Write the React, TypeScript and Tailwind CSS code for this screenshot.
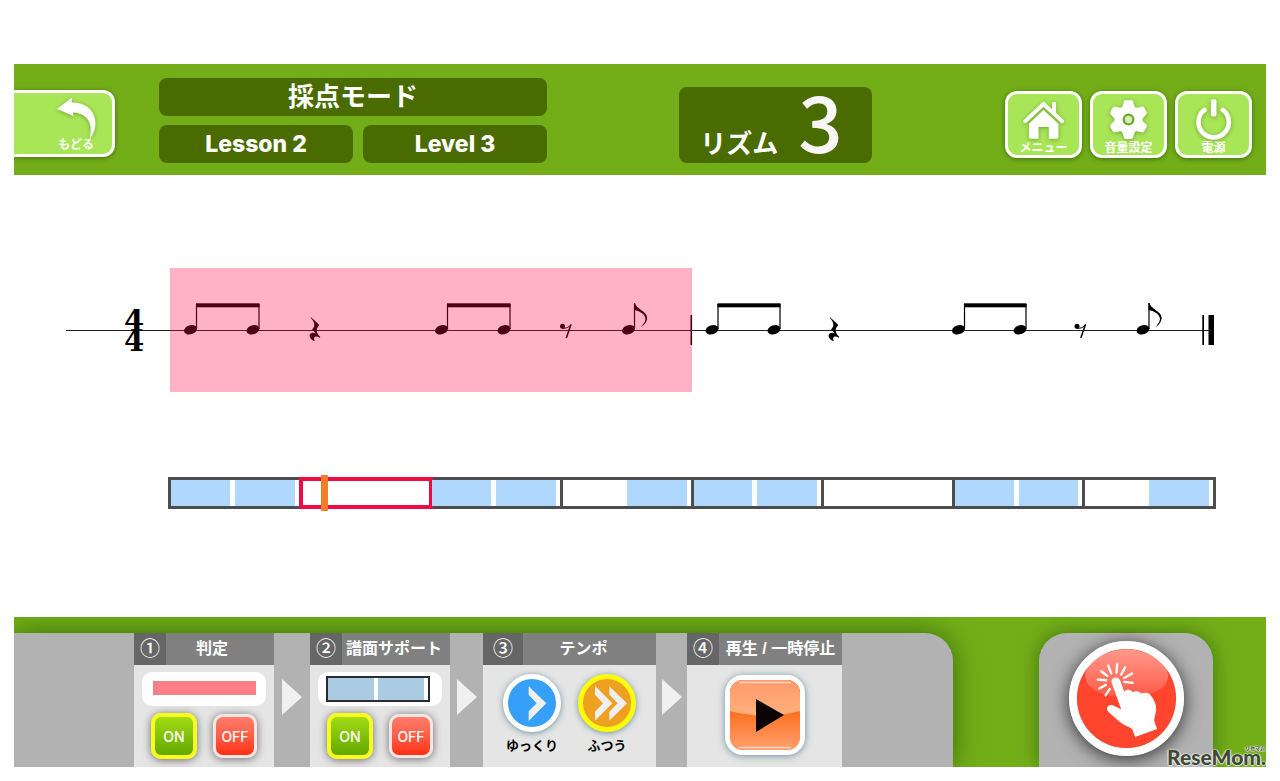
import React from "react";

const WHITE_SHADOWED = "drop-shadow-[0_1px_2px_rgba(50,90,0,0.45)]";

function BackIcon() {
  return (
    <svg viewBox="54 94 44 46" className={`h-[46px] w-11 shrink-0 ${WHITE_SHADOWED}`} aria-hidden="true">
      <path
        d="M57 108 L72 96.5 L71.5 101.5 C86 101 95 110 95.5 122 C95.5 129 93 134 89.5 138 C92 129 91 121 85.500 116 C82 113 78 111.500 73 111.500 L73.500 115 Z"
        fill="#fff"
      />
    </svg>
  );
}

function HomeIcon() {
  return (
    <svg viewBox="130 112 130 128" className={`h-[43px] w-[43px] ${WHITE_SHADOWED}`} aria-hidden="true">
      <path d="M221 124h12v38l-12-12z" fill="#fff" />
      <path d="M140 181 L195 129 L251 181" fill="none" stroke="#fff" strokeWidth="12" strokeLinecap="round" strokeLinejoin="round" />
      <path d="M195 147 L240 189 V229 Q240 234 235 234 H211 V199 H180 V234 H156 Q151 234 151 229 V189 Z" fill="#fff" />
    </svg>
  );
}

function GearIcon() {
  return (
    <svg viewBox="-65 -64 130 128" className={`h-[43px] w-[43px] ${WHITE_SHADOWED}`} aria-hidden="true">
      <circle r="42" fill="#fff" />
      {[0, 60, 120, 180, 240, 300].map((a) => (
        <path
          key={a}
          transform={`rotate(${a})`}
          d="M-27 -28 Q-17 -38 -15 -50 Q-14 -59 -8 -59 H8 Q14 -59 15 -50 Q17 -38 27 -28 Z"
          fill="#fff"
        />
      ))}
      <circle r="14.500" fill="#d4f0b4" stroke="#6fa82c" strokeWidth="7" />
    </svg>
  );
}

function PowerIcon() {
  return (
    <svg viewBox="638 108 130 128" className={`h-[43px] w-[43px] ${WHITE_SHADOWED}`} aria-hidden="true">
      <path d="M676 143 A46 46 0 1 0 731 143" fill="none" stroke="#fff" strokeWidth="14" strokeLinecap="round" />
      <rect x="695" y="111" width="17" height="52" rx="6" fill="#fff" />
    </svg>
  );
}

function MenuButton({ label, children }: { label: string; children: React.ReactNode }) {
  return (
    <button
      type="button"
      className="flex h-[67px] w-[77px] flex-col items-center rounded-[12px] border-[3px] border-white bg-[#a8e557] pt-1 shadow-[0_1px_5px_rgba(30,70,0,0.6)]"
    >
      {children}
      <span className="whitespace-nowrap text-[12px] font-bold leading-[14px] text-white">{label}</span>
    </button>
  );
}

function Pair({ x1, x2 }: { x1: number; x2: number }) {
  return (
    <g>
      <Head x={x1} />
      <Head x={x2} />
      <path d={`M${x1 + 6} 329V304M${x2 + 6} 329V304`} stroke="#000" strokeWidth="1.200" />
      <rect x={x1 + 5.5} y="303.300" width={x2 - x1 + 1} height="4" />
    </g>
  );
}

function Head({ x }: { x: number }) {
  return <ellipse cx={x} cy="329.800" rx="6.600" ry="4.500" transform={`rotate(-18 ${x} 330)`} />;
}

function Flagged({ x }: { x: number }) {
  return (
    <g>
      <Head x={x} />
      <path d={`M${x + 6} 329V303`} stroke="#000" strokeWidth="1.200" />
      <path
        transform={`translate(${x + 6} 303)`}
        d="M-.5 0 H.5 C1.500 6 12.500 8 12.700 15 C12.500 19 10 22 6.500 24 C9.500 20.500 11 18 11 15.500 C10.500 11 5 8 -.5 7 Z"
      />
    </g>
  );
}

function QuarterRest({ x }: { x: number }) {
  return (
    <path
      transform={`translate(${x} 330) scale(0.333)`}
      d="M-12 -38 L11 -17 Q13 -14 11 -12 C2 -2 3 8 16 21 L14 23 C4 16 -8 20 0 34 C-18 28 -22 9 -7 8 Q-2 8 2 10 L-9 -2 C1 -12 1 -22 -13 -37 Z"
    />
  );
}

function EighthRest({ x }: { x: number }) {
  return (
    <g transform={`translate(${x} 330)`}>
      <circle cx="-3.500" cy="-3.700" r="2.500" />
      <path d="M-4 -1.800 Q2 -1 5 -5.500" fill="none" stroke="#000" strokeWidth="1" />
      <path d="M5 -5.500 L.3 8" fill="none" stroke="#000" strokeWidth="1.500" />
    </g>
  );
}

function Score() {
  return (
    <svg viewBox="14 268 1252 124" className="w-full" role="img" aria-label="4/4">
      <path d="M66 330.500H1209" stroke="#222" strokeWidth="1" />
      <g fontFamily="'DejaVu Serif', serif" fontWeight="700" fontSize="29" textAnchor="middle">
        <text x="134" y="331">4</text>
        <text x="134" y="351">4</text>
      </g>
      <Pair x1={190.5} x2={253} />
      <QuarterRest x={315} />
      <Pair x1={441.5} x2={504} />
      <EighthRest x={566} />
      <Flagged x={628.5} />
      <rect x="690.500" y="315" width="1.600" height="30" />
      <Pair x1={712} x2={774} />
      <QuarterRest x={834} />
      <Pair x1={958.5} x2={1020} />
      <EighthRest x={1080.5} />
      <Flagged x={1143} />
      <rect x="1202.300" y="315" width="1.700" height="30" />
      <rect x="1208.500" y="315" width="5.500" height="30" />
      <rect x="170" y="268" width="522" height="124" fill="#ff0040" opacity="0.3" />
    </svg>
  );
}

const BEATS = [
  [true, true],
  [false, false],
  [true, true],
  [false, true],
  [true, true],
  [false, false],
  [true, true],
  [false, true],
];

function Timeline() {
  return (
    <div className="mt-[85px] ml-[154px] mr-[50px] grid h-8 grid-cols-8 border-y-[3px] border-l-[3px] border-[#4d4d4d]">
      {BEATS.map(([a, b], i) => (
        <div key={i} className="relative grid grid-cols-2 border-r-[3px] border-[#4d4d4d]">
          <div className="pr-[5px]">{a && <div className="h-full bg-[#b0d8ff]" />}</div>
          <div className="pr-1">{b && <div className="h-full bg-[#b0d8ff]" />}</div>
          {i === 1 && (
            <>
              <div className="absolute -inset-y-[3px] -left-[3px] -right-1 border-4 border-[#ee0a42]" />
              <div className="absolute -inset-y-[5px] left-[19px] w-[7px] rounded-[1px] bg-[#f47d28]" />
            </>
          )}
        </div>
      ))}
    </div>
  );
}

function Step({
  mark,
  title,
  className,
  markClass = "w-8",
  titleClass = "",
  children,
}: {
  mark: string;
  title: string;
  className: string;
  markClass?: string;
  titleClass?: string;
  children: React.ReactNode;
}) {
  return (
    <section className={`flex shrink-0 flex-col bg-[#e5e5e5] ${className}`}>
      <h2 className="flex h-8 items-stretch bg-[#808080] text-[16px] text-white">
        <span className={`flex shrink-0 items-center justify-center bg-[#666] text-[20px] font-medium ${markClass}`}>
          {mark}
        </span>
        <span className={`flex grow items-center justify-center whitespace-nowrap font-bold ${titleClass}`}>{title}</span>
      </h2>
      {children}
    </section>
  );
}

function Next({ className }: { className: string }) {
  return (
    <div className={`flex shrink-0 justify-center pt-[46px] ${className}`}>
      <svg viewBox="0 0 20 36" className="h-9 w-5" aria-hidden="true">
        <path d="M0 0L20 18L0 36Z" fill="#f0f0f0" />
      </svg>
    </div>
  );
}

function OnOff() {
  return (
    <div className="mt-[7px] flex items-center justify-center gap-4 text-[14px] text-white">
      <button
        type="button"
        aria-pressed="true"
        className="size-[46px] rounded-[10px] border-4 border-[#f8fb1c] bg-linear-to-b from-[#a3dc14] to-[#62a800] font-['Inter','Liberation_Sans',sans-serif] font-medium shadow-[0_1px_8px_rgba(0,0,0,0.55)]"
      >
        ON
      </button>
      <button
        type="button"
        aria-pressed="false"
        className="size-11 rounded-[10px] border-[3px] border-[#f3e6e4] bg-linear-to-b from-[#ff7d6a] to-[#ff2c0c] font-['Inter','Liberation_Sans',sans-serif] font-medium shadow-[0_1px_8px_rgba(0,0,0,0.55)]"
      >
        OFF
      </button>
    </div>
  );
}

function TapIcon() {
  return (
    <svg viewBox="170 117 298 298" className="size-[99px]" aria-hidden="true">
      <defs>
        <linearGradient id="gloss" x1="0" y1="0" x2="0" y2="1">
          <stop offset="0" stopColor="#fff" stopOpacity="0.45" />
          <stop offset="1" stopColor="#fff" stopOpacity="0.12" />
        </linearGradient>
      </defs>
      <circle cx="319" cy="266" r="149" fill="#ff452d" />
      <path d="M319 118 C376 118 444 155 444 198 C444 238 388 262 319 262 C250 262 195 238 195 198 C195 155 262 118 319 118 Z" fill="url(#gloss)" />
      <g stroke="#fff" strokeWidth="7" strokeLinecap="round">
        <path d="M291 162L289 188M315 172L303 194M336 191L312 204M338 219L312 216M264 167L273 190M243 184L261 198M233 209L258 211M237 236L257 225M256 256L269 237" />
      </g>
      <path
        d="M275 220 C269 202 293 196 300 212 L312 245 C320 237 334 239 338 248 C346 241 360 244 364 252 C374 245 391 250 394 260 C403 270 410 288 408 304 L402 332 L411 358 L345 382 L336 358 C325 350 310 346 298 336 L264 306 C255 294 266 281 279 287 L303 298 Z"
        fill="#fff"
      />
    </svg>
  );
}

export default function App() {
  return (
    <div className="flex min-h-screen flex-col bg-white px-[14px] pt-16 pb-[14px] font-['Liberation_Sans','Noto_Sans_CJK_JP',sans-serif]">
      <header className="flex items-start overflow-hidden bg-[#73ae19] pt-[14px] pr-[14px] pb-3">
        <button
          type="button"
          className="mt-3 flex h-[67px] w-[101px] shrink-0 flex-col items-end rounded-r-[12px] border-y-[3px] border-r-[3px] border-white bg-[#a8e557] pt-[2px] pr-[14px] shadow-[0_1px_5px_rgba(30,70,0,0.6)]"
        >
          <BackIcon />
          <span className="-mt-[3px] pr-1 text-[12px] font-bold leading-[14px] text-white">もどる</span>
        </button>

        <div className="ml-11 flex w-[388px] shrink-0 flex-col gap-[9px] text-white">
          <h1 className="flex h-[38px] items-center justify-center rounded-[8px] bg-[#496b00] text-[26px] font-bold">
            採点モード
          </h1>
          <div className="flex gap-[10px] font-['Inter','Liberation_Sans',sans-serif] text-[23px] font-extrabold">
            <div className="flex h-[38px] w-[194px] items-center justify-center rounded-[8px] bg-[#496b00]">Lesson 2</div>
            <div className="flex h-[38px] w-[184px] items-center justify-center rounded-[8px] bg-[#496b00]">Level 3</div>
          </div>
        </div>

        <div className="mt-[9px] ml-[132px] flex h-[76px] w-[193px] shrink-0 items-baseline justify-center gap-5 rounded-[8px] bg-[#496b00] pr-2 text-white">
          <span className="text-[26px] font-bold">リズム</span>
          <span className="font-['Noto_Sans_CJK_JP',sans-serif] text-[78px] font-medium leading-[64px] text-[#f7f7f7]">3</span>
        </div>

        <nav className="mt-[13px] ml-auto flex gap-2">
          <MenuButton label="メニュー">
            <HomeIcon />
          </MenuButton>
          <MenuButton label="音量設定">
            <GearIcon />
          </MenuButton>
          <MenuButton label="電源">
            <PowerIcon />
          </MenuButton>
        </nav>
      </header>

      <main className="pt-[93px] pb-[85px]">
        <Score />
        <Timeline />
      </main>

      <footer className="relative mt-auto flex overflow-hidden bg-[#73ae19] pt-4">
        <div className="flex w-3/4 rounded-tr-[28px] bg-[#b2b2b2] pl-[120px] shadow-[0_0_28px_rgba(30,80,0,0.7)]">
          <Step mark="①" title="判定" className="w-[140px]" titleClass="pr-4">
            <div className="mx-2 mt-[7px] flex h-[34px] items-start justify-center rounded-[10px] bg-white pt-[9px]">
              <div className="h-[14px] w-[103px] bg-[#fb7f8b]" />
            </div>
            <OnOff />
          </Step>
          <Next className="w-9" />
          <Step mark="②" title="譜面サポート" className="w-[140px]" titleClass="pr-1">
            <div className="mx-2 mt-[7px] flex h-[34px] items-start justify-center rounded-[10px] bg-white pt-1 pr-1">
              <div className="flex h-[26px] w-[104px] gap-1 border-[2px] border-[#2b2a36] pr-1">
                <div className="grow bg-[#a9cce3]" />
                <div className="grow bg-[#a9cce3]" />
              </div>
            </div>
            <OnOff />
          </Step>
          <Next className="w-[33px]" />
          <Step mark="③" title="テンポ" className="w-[173px]" markClass="w-10" titleClass="pr-3">
            <div className="mt-[9px] flex justify-center gap-4 text-[13px] font-bold leading-4 text-black">
              <button type="button" className="flex w-[59px] flex-col items-center gap-[6px] whitespace-nowrap">
                <span className="flex size-[58px] items-center justify-center rounded-full border-[5px] border-white bg-[#36a0f8] shadow-[0_1px_6px_rgba(60,110,130,0.7)]">
                  <svg viewBox="171 205 144 144" className="size-12" aria-hidden="true">
                    <path d="M233 227L286 278L233 331V302L257 278L233 252Z" fill="#efefef" />
                  </svg>
                </span>
                ゆっくり
              </button>
              <button type="button" className="flex w-[59px] flex-col items-center gap-[6px] whitespace-nowrap">
                <span className="flex size-[58px] items-center justify-center rounded-full border-[5px] border-[#fcfb0c] bg-[#eea020] shadow-[0_1px_6px_rgba(60,110,130,0.7)]">
                  <svg viewBox="398 205 144 144" className="size-12" aria-hidden="true">
                    <path d="M434 225L486 278L434 330V303L458 278L434 252Z" fill="#efefef" />
                    <path d="M477 227L530 278L477 330V303L502 278L477 252Z" fill="#efefef" />
                  </svg>
                </span>
                ふつう
              </button>
            </div>
          </Step>
          <Next className="w-[31px]" />
          <Step mark="④" title="再生 / 一時停止" className="w-[155px]">
            <button
              type="button"
              aria-label="再生 / 一時停止"
              className="mx-auto mt-[10px] mb-3 size-20 overflow-hidden rounded-[18px] border-[5px] border-white bg-[#ff7a2c] shadow-[0_1px_7px_rgba(60,110,130,0.7)]"
            >
              <svg viewBox="0 0 70 70" className="size-full" aria-hidden="true">
                <defs>
                  <linearGradient id="top" x1="0" y1="0" x2="0" y2="1">
                    <stop offset="0" stopColor="#ff9a6c" />
                    <stop offset="1" stopColor="#ffb07c" />
                  </linearGradient>
                  <linearGradient id="base" x1="0" y1="0" x2="0" y2="1">
                    <stop offset="0.450" stopColor="#ff7020" />
                    <stop offset="1" stopColor="#ffa070" />
                  </linearGradient>
                </defs>
                <rect width="70" height="70" fill="url(#base)" />
                <path d="M0 0H70V31Q35 40 0 31Z" fill="url(#top)" />
                <path d="M10 2.500H60M10 67.500H60" stroke="#ffd8c0" strokeWidth="1.500" strokeLinecap="round" />
                <path d="M26 19L54 35L26 52Z" fill="#0a0503" />
              </svg>
            </button>
          </Step>
        </div>

        <div className="ml-[86px] flex w-[174px] shrink-0 justify-center rounded-t-[28px] bg-[#b2b2b2] pt-2 shadow-[0_0_20px_rgba(30,80,0,0.6)]">
          <button
            type="button"
            aria-label="タップ"
            className="flex size-[115px] items-center justify-center rounded-full border-8 border-white shadow-[0_3px_18px_rgba(0,0,0,0.75)]"
          >
            <TapIcon />
          </button>
        </div>

        <div className="absolute right-0 bottom-0 flex flex-col items-end text-[#3f4a35] [text-shadow:0_0_2px_#fff,1px_0_1px_#ddd,-1px_0_1px_#ddd,0_1px_1px_#ddd]">
          <span className="-mb-1 pr-px text-[5px] font-bold leading-[6px]">リセマム</span>
          <span className="font-['Lato','Liberation_Sans',sans-serif] text-[21px] font-black leading-5">ReseMom.</span>
        </div>
      </footer>
    </div>
  );
}
